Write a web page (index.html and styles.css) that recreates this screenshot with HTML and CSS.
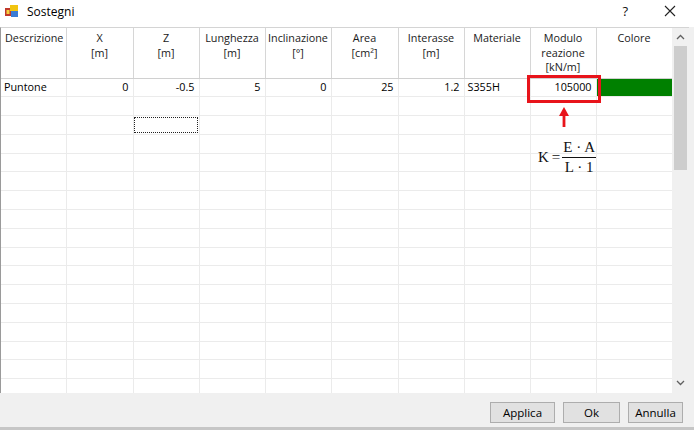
FILE: index.html
```html
<!DOCTYPE html>
<html>
<head>
<meta charset="utf-8">
<link rel="stylesheet" href="styles.css">
</head>
<body>
<div class="window">
  <div class="titlebar">
    <svg class="appicon" width="13" height="12" viewBox="0 0 13 12">
      <rect x="0" y="3" width="7" height="8" fill="#c0392b"/>
      <rect x="1.5" y="5" width="3" height="4" fill="#f4d03f"/>
      <rect x="5" y="0" width="8" height="6" fill="#f1c40f"/>
      <rect x="6" y="6" width="7" height="6" fill="#3a7bd5"/>
    </svg>
    <span class="title">Sostegni</span>
    <span class="help">?</span>
    <svg class="close" width="12" height="12" viewBox="0 0 12 12">
      <path d="M1 1 L11 11 M11 1 L1 11" stroke="#222" stroke-width="1.1" fill="none"/>
    </svg>
  </div>
  <div class="gridwrap">
    <div class="gridarea">
      <table class="grid">
        <colgroup>
          <col style="width:65px"><col style="width:67px"><col style="width:66px"><col style="width:66px"><col style="width:66px">
          <col style="width:67px"><col style="width:66px"><col style="width:66px"><col style="width:66px"><col style="width:76px">
        </colgroup>
        <thead>
          <tr>
            <th class="left">Descrizione</th>
            <th>X<br>[m]</th>
            <th>Z<br>[m]</th>
            <th>Lunghezza<br>[m]</th>
            <th>Inclinazione<br>[°]</th>
            <th>Area<br>[cm²]</th>
            <th>Interasse<br>[m]</th>
            <th>Materiale</th>
            <th>Modulo<br>reazione<br>[kN/m]</th>
            <th>Colore</th>
          </tr>
        </thead>
        <tbody>
          <tr>
            <td>Puntone</td><td class="num">0</td><td class="num">-0.5</td><td class="num">5</td><td class="num">0</td>
            <td class="num">25</td><td class="num">1.2</td><td>S355H</td><td class="num">105000</td><td class="green"></td>
          </tr>
          <tr><td></td><td></td><td></td><td></td><td></td><td></td><td></td><td></td><td></td><td></td></tr>
          <tr><td></td><td></td><td class="focus"></td><td></td><td></td><td></td><td></td><td></td><td></td><td></td></tr>
          <tr><td></td><td></td><td></td><td></td><td></td><td></td><td></td><td></td><td></td><td></td></tr>
          <tr><td></td><td></td><td></td><td></td><td></td><td></td><td></td><td></td><td></td><td></td></tr>
          <tr><td></td><td></td><td></td><td></td><td></td><td></td><td></td><td></td><td></td><td></td></tr>
          <tr><td></td><td></td><td></td><td></td><td></td><td></td><td></td><td></td><td></td><td></td></tr>
          <tr><td></td><td></td><td></td><td></td><td></td><td></td><td></td><td></td><td></td><td></td></tr>
          <tr><td></td><td></td><td></td><td></td><td></td><td></td><td></td><td></td><td></td><td></td></tr>
          <tr><td></td><td></td><td></td><td></td><td></td><td></td><td></td><td></td><td></td><td></td></tr>
          <tr><td></td><td></td><td></td><td></td><td></td><td></td><td></td><td></td><td></td><td></td></tr>
          <tr><td></td><td></td><td></td><td></td><td></td><td></td><td></td><td></td><td></td><td></td></tr>
          <tr><td></td><td></td><td></td><td></td><td></td><td></td><td></td><td></td><td></td><td></td></tr>
          <tr><td></td><td></td><td></td><td></td><td></td><td></td><td></td><td></td><td></td><td></td></tr>
          <tr><td></td><td></td><td></td><td></td><td></td><td></td><td></td><td></td><td></td><td></td></tr>
          <tr><td></td><td></td><td></td><td></td><td></td><td></td><td></td><td></td><td></td><td></td></tr>
          <tr><td></td><td></td><td></td><td></td><td></td><td></td><td></td><td></td><td></td><td></td></tr>
          <tr><td></td><td></td><td></td><td></td><td></td><td></td><td></td><td></td><td></td><td></td></tr>
        </tbody>
      </table>
      <div class="redbox"></div>
      <svg class="arrow" width="12" height="20" viewBox="0 0 12 20">
        <polygon points="6,0 11,9 1,9" fill="#e8141b"/>
        <rect x="4.6" y="8" width="2.8" height="12" fill="#e8141b"/>
      </svg>
      <div class="formula">
        <span class="k">K</span><span class="eq">=</span>
        <span class="frac"><span class="numr">E · A</span><span class="den">L · 1</span></span>
      </div>
    </div>
    <div class="scrollbar">
      <svg class="sarrow" width="9" height="6" viewBox="0 0 9 6"><path d="M1 5 L4.5 1.5 L8 5" stroke="#606060" stroke-width="1.3" fill="none"/></svg>
      <div class="thumb"></div>
      <div class="spacer"></div>
      <svg class="sarrow" width="9" height="6" viewBox="0 0 9 6"><path d="M1 1 L4.5 4.5 L8 1" stroke="#606060" stroke-width="1.3" fill="none"/></svg>
    </div>
  </div>
  <div class="footer">
    <button class="btn b-applica">Applica</button>
    <button class="btn b-ok">Ok</button>
    <button class="btn b-annulla">Annulla</button>
  </div>
</div>
</body>
</html>
```
FILE: styles.css
```css
* { box-sizing: border-box; }
html, body { margin: 0; padding: 0; background: #f0f0f0; }
body { font-family: "Open Sans", "Noto Sans", sans-serif; font-size: 10.8px; color: #000; }

.window {
  width: 694px;
  height: 430px;
  display: flex;
  flex-direction: column;
  background: #f0f0f0;
  border-bottom: 3px solid #c6c6c6;
}

.titlebar {
  height: 27px;
  flex: none;
  background: #fff;
  display: flex;
  align-items: center;
  padding-left: 5px;
  padding-bottom: 5px;
}
.appicon { flex: none; }
.title { margin-left: 9px; font-size: 12px; color: #000; flex: 1; }
.help { font-size: 13px; margin-right: 36px; color: #111; }
.close { margin-right: 18px; }

.gridwrap {
  flex: none;
  height: 366px;
  display: flex;
  width: 689px;
  border-left: 1px solid #9a9a9a;
  border-top: 1px solid #d4d4d4;
  background: #fff;
}
.gridarea {
  position: relative;
  width: 671px;
  overflow: hidden;
  background: #fff;
}
.grid {
  border-collapse: collapse;
  table-layout: fixed;
  width: 671px;
}
.grid th {
  height: 50px;
  vertical-align: top;
  font-weight: normal;
  color: #1a1a1a;
  line-height: 14.6px;
  padding: 3px 2px 0 2px;
  border-right: 1px solid #d6d6d6;
  border-bottom: 1px solid #d0d0d0;
  text-align: center;
  white-space: nowrap;
}
.grid th.left { text-align: left; padding-left: 4px; }
.grid td {
  height: 18.8px;
  padding: 0 3px 0 3px;
  border-right: 1px solid #ebebeb;
  border-bottom: 1px solid #ebebeb;
  white-space: nowrap;
  line-height: 16px;
}
.grid td.num { text-align: right; padding-right: 4px; }
.grid td.green { background: #008000; }
.grid td.focus { outline: 1px dotted #222; outline-offset: -2px; }

.redbox {
  position: absolute;
  left: 526px;
  top: 47px;
  width: 74px;
  height: 28px;
  border: 3px solid #e8141b;
}
.arrow {
  position: absolute;
  left: 557px;
  top: 79px;
}
.formula {
  position: absolute;
  left: 537px;
  top: 111px;
  display: flex;
  align-items: center;
  font-family: "Liberation Serif", serif;
  font-size: 15px;
  color: #111;
}
.formula .eq { margin: 0 2px 0 3px; }
.frac { display: flex; flex-direction: column; align-items: center; }
.frac .numr { border-bottom: 1px solid #111; padding: 0 1px 1px; line-height: 17px; }
.frac .den { line-height: 17px; padding-top: 1px; }

.scrollbar {
  width: 17px;
  flex: none;
  background: #f0f0f0;
  display: flex;
  flex-direction: column;
  align-items: center;
  padding-top: 6px;
  padding-bottom: 7px;
}
.scrollbar .sarrow { flex: none; }
.thumb {
  margin-top: 6px;
  width: 13px;
  height: 124px;
  background: #cdcdcd;
}
.spacer { flex: 1; }

.footer {
  flex: 1;
  display: flex;
  justify-content: flex-end;
  align-items: flex-start;
  padding: 9px 11px 0 0;
  gap: 8px;
}
.btn {
  height: 21px;
  background: #e1e1e1;
  border: 1px solid #adadad;
  font-family: "Open Sans", "Noto Sans", sans-serif;
  font-size: 11.5px;
  color: #000;
  padding: 0;
}
.b-applica { width: 65px; }
.b-ok { width: 57px; }
.b-annulla { width: 55px; }
```
